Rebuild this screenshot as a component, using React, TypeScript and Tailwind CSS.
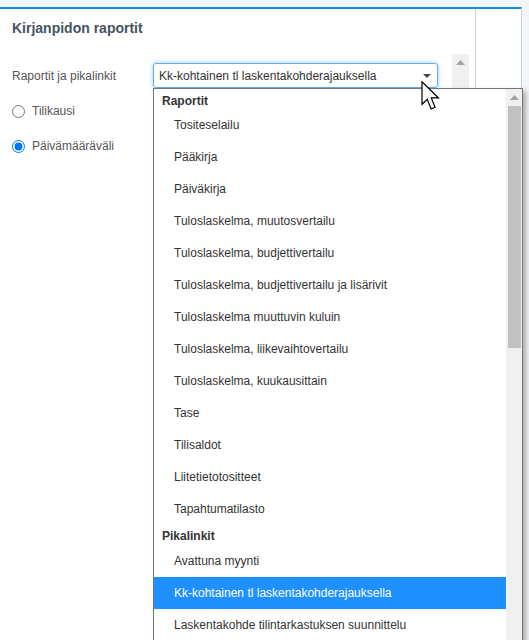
import { useState } from 'react';

const RAPORTIT = [
  'Tositeselailu',
  'Pääkirja',
  'Päiväkirja',
  'Tuloslaskelma, muutosvertailu',
  'Tuloslaskelma, budjettivertailu',
  'Tuloslaskelma, budjettivertailu ja lisärivit',
  'Tuloslaskelma muuttuvin kuluin',
  'Tuloslaskelma, liikevaihtovertailu',
  'Tuloslaskelma, kuukausittain',
  'Tase',
  'Tilisaldot',
  'Liitetietotositteet',
  'Tapahtumatilasto',
];

const PIKALINKIT = [
  'Avattuna myynti',
  'Kk-kohtainen tl laskentakohderajauksella',
  'Laskentakohde tilintarkastuksen suunnittelu',
];

function UpArrow() {
  return (
    <svg width="9" height="5" viewBox="0 0 9 5" className="block">
      <path d="M0 5 L4.5 0 L9 5 Z" fill="#a3a3a3" />
    </svg>
  );
}

function Cursor() {
  return (
    <svg width="26" height="30" viewBox="0 0 13 20" className="absolute left-[418px] top-[81px]">
      <path
        d="M0.5 0.5 L0.5 15.5 L4 12.2 L6.6 18.6 L9.2 17.5 L6.7 11.3 L11.5 11.3 Z"
        fill="#fff"
        stroke="#000"
        strokeWidth="0.8"
        strokeLinejoin="miter"
      />
    </svg>
  );
}

function Option({ label, active }: { label: string; active?: boolean }) {
  return (
    <div
      className={
        'h-[32px] flex items-center pl-[20px] text-[12px] whitespace-nowrap ' +
        (active ? 'bg-[#1e90ff] text-white' : 'text-[#333]')
      }
    >
      {label}
    </div>
  );
}

function Dropdown({ selected }: { selected: string }) {
  return (
    <div className="absolute left-[153px] top-[88px] w-[370px] h-[560px] bg-white border border-[#767676] shadow-[3px_3px_5px_rgba(0,0,0,0.3)] flex">
      <div className="flex-1 flex flex-col">
        <div className="h-[20px] flex items-center pl-[8px] pt-[3px] text-[12px] font-bold text-[#333]">Raportit</div>
        {RAPORTIT.map((r) => (
          <Option key={r} label={r} active={r === selected} />
        ))}
        <div className="h-[20px] flex items-center pl-[8px] pt-[2px] text-[12px] font-bold text-[#333]">Pikalinkit</div>
        {PIKALINKIT.map((r) => (
          <Option key={r} label={r} active={r === selected} />
        ))}
      </div>
      <div className="w-[16px] bg-[#f0f0f0] flex flex-col items-center">
        <div className="h-[17px] flex items-center justify-center">
          <UpArrow />
        </div>
        <div className="w-[13px] h-[242px] bg-[#c1c1c1]" />
      </div>
    </div>
  );
}

export default function App() {
  const [period, setPeriod] = useState('paiva');
  const selected = 'Kk-kohtainen tl laskentakohderajauksella';

  return (
    <div
      className="relative w-[529px] h-[640px] overflow-hidden bg-[#f3f6f9] pt-[7px]"
      style={{ fontFamily: '"Liberation Sans", Arial, sans-serif' }}
    >
      <div className="w-[522px] h-[633px] bg-white border-t-2 border-t-[#1a8be3] border-r border-r-[#c6d3dc] flex">
        <div className="w-[476px] h-full border-r border-r-[#c6d3dc] flex flex-col">
          <div className="h-[45px] pl-[12px] pt-[11px] text-[14px] font-bold text-[#465462] leading-[16px]">
            Kirjanpidon raportit
          </div>
          <div className="flex flex-1">
            <div className="w-[452px] pt-[9px] pl-[12px]">
              <div className="flex items-center h-[25px]">
                <div className="w-[141px] text-[12px] text-[#555]">Raportit ja pikalinkit</div>
                <div className="w-[285px] h-[25px] rounded-[3px] border border-[#66afe9] shadow-[0_0_4px_rgba(102,175,233,0.7)] flex items-center pl-[5px] pr-[6px]">
                  <span className="flex-1 text-[12px] text-[#333] whitespace-nowrap">{selected}</span>
                  <svg width="8" height="4" viewBox="0 0 8 4">
                    <path d="M0 0 L8 0 L4 4 Z" fill="#444" />
                  </svg>
                </div>
              </div>
              <label className="flex items-center gap-[7px] h-[20px] mt-[13px] text-[12px] text-[#555]">
                <input
                  type="radio"
                  name="period"
                  className="m-0 w-[13px] h-[13px]"
                  checked={period === 'tili'}
                  onChange={() => setPeriod('tili')}
                />
                Tilikausi
              </label>
              <label className="flex items-center gap-[7px] h-[20px] mt-[15px] text-[12px] text-[#555]">
                <input
                  type="radio"
                  name="period"
                  className="m-0 w-[13px] h-[13px]"
                  checked={period === 'paiva'}
                  onChange={() => setPeriod('paiva')}
                />
                Päivämääräväli
              </label>
            </div>
            <div className="w-[17px] bg-[#f0f0f0] flex flex-col items-center">
              <div className="h-[17px] flex items-center justify-center">
                <UpArrow />
              </div>
            </div>
          </div>
        </div>
      </div>
      <Dropdown selected={selected} />
      <Cursor />
    </div>
  );
}
